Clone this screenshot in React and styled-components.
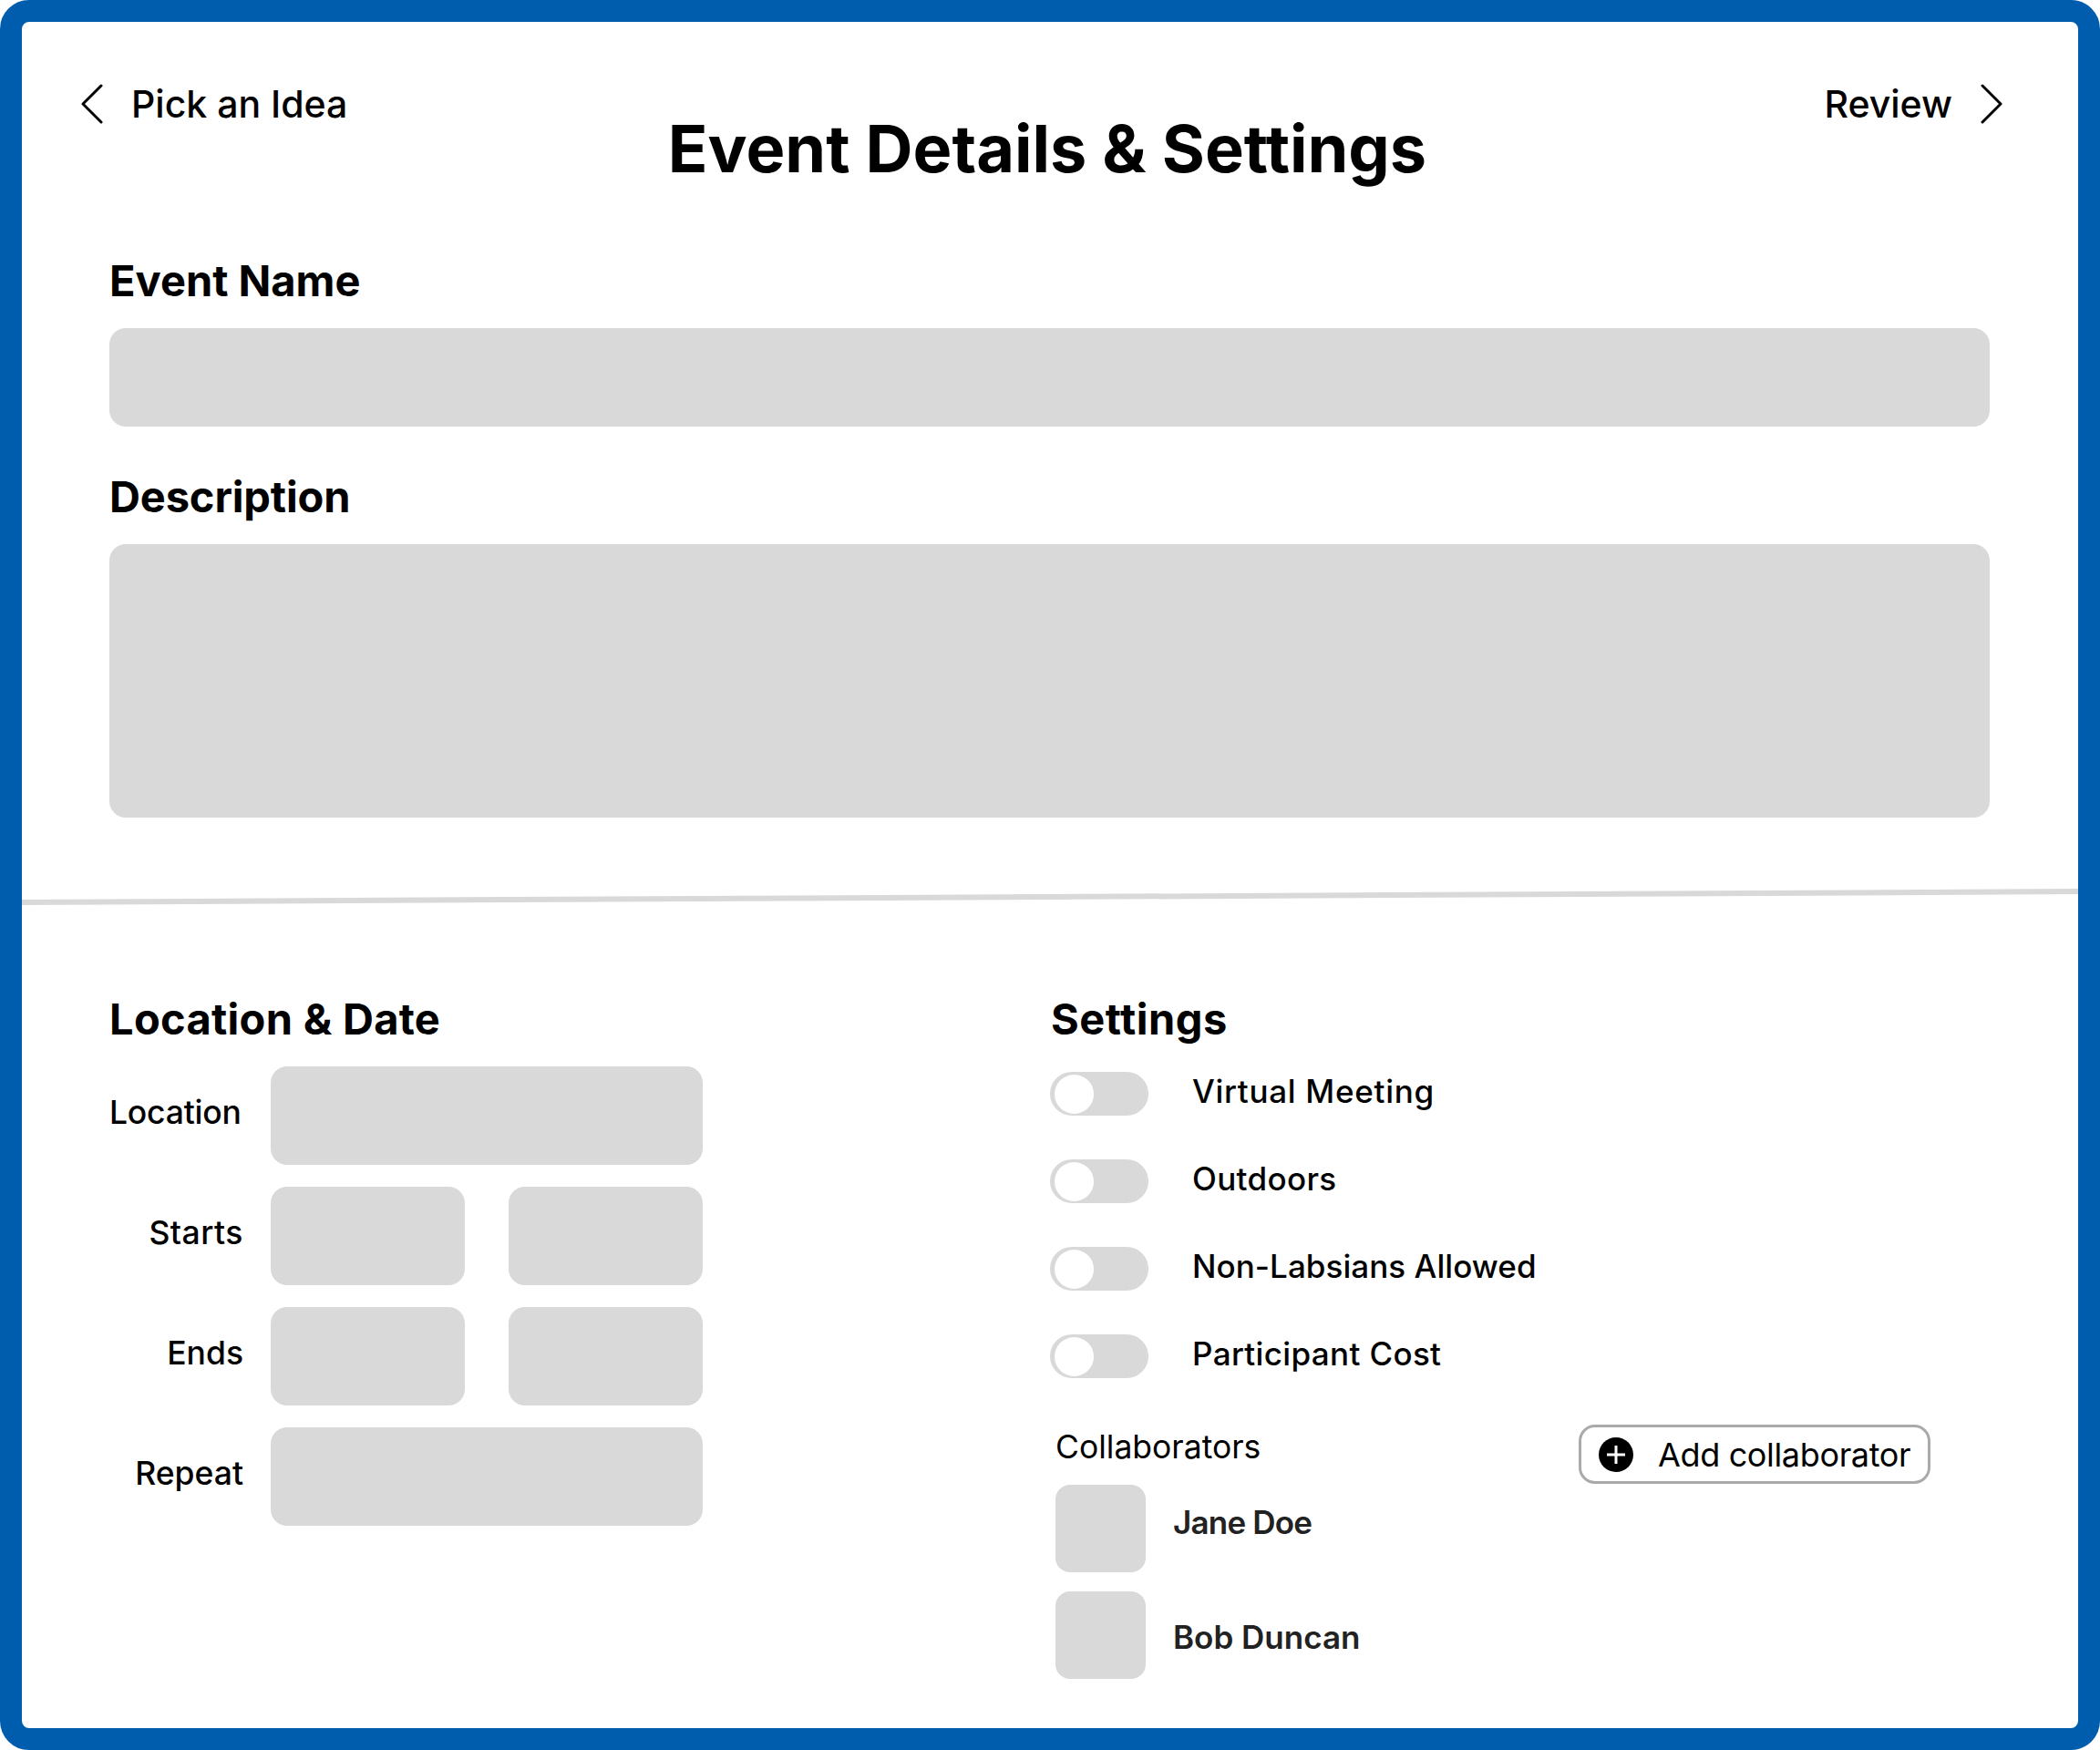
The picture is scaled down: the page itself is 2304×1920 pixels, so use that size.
import React from 'react';
import styled, { createGlobalStyle } from 'styled-components';

const GlobalStyle = createGlobalStyle`
  * { box-sizing: border-box; }
  html, body { margin: 0; padding: 0; background: #fff; }
  body { font-family: 'Inter', 'Liberation Sans', sans-serif; color: #000; }
`;

const Frame = styled.main`
  width: 2304px;
  height: 1920px;
  border: 24px solid #005dae;
  border-radius: 32px;
  background: #fff;
  overflow: hidden;
`;

const Header = styled.header`
  display: grid;
  grid-template-columns: 1fr auto 1fr;
  align-items: start;
  padding: 69px 83px 0 65px;
`;

const NavLink = styled.a`
  display: flex;
  align-items: center;
  gap: 31px;
  height: 42px;
  justify-content: ${({ $end }) => ($end ? 'flex-end' : 'flex-start')};
  font-size: 41px;
  font-weight: 500;
  line-height: 44px;
`;

const Title = styled.h1`
  margin: 34px 0 0 12px;
  font-size: 72px;
  font-weight: 700;
  line-height: 72px;
  white-space: nowrap;
`;

const Details = styled.section`
  padding: 84px 97px 0 96px;
`;

const SectionLabel = styled.h2`
  margin: 0 0 31px;
  padding-top: 2px;
  height: 46px;
  font-size: 47px;
  font-weight: 700;
  letter-spacing: ${({ $tracking }) => $tracking || '0'};
  line-height: 46px;
`;

const Field = styled.div`
  height: ${({ $tall }) => ($tall ? '300px' : '108px')};
  margin-bottom: ${({ $last }) => ($last ? '0' : '52px')};
  background: #d9d9d9;
  border-radius: 18px;
`;

const Divider = styled.hr`
  height: 6px;
  margin: 84px -10px 0;
  border: 0;
  background: #d9d9d9;
  transform: rotate(-0.3deg);
`;

const Columns = styled.section`
  display: grid;
  grid-template-columns: 1033px 1fr;
  padding: 106px 0 0 96px;
`;

const FormRows = styled.div`
  display: grid;
  grid-template-columns: 147px 474px;
  column-gap: 30px;
  row-gap: 24px;
  width: 651px;
`;

const RowLabel = styled.label`
  align-self: center;
  margin-bottom: 6px;
  padding-right: ${({ $inset }) => ($inset ? '3px' : '0')};
  font-size: 35.5px;
  font-weight: 500;
  letter-spacing: ${({ $tracking }) => $tracking || '0'};
  line-height: 1;
  text-align: right;
  white-space: nowrap;
`;

const FieldPair = styled.div`
  display: grid;
  grid-template-columns: ${({ $split }) => ($split ? '213px 213px' : '1fr')};
  column-gap: 48px;
`;

const SmallField = styled.div`
  height: 108px;
  background: #d9d9d9;
  border-radius: 18px;
`;

const SettingsHeading = styled(SectionLabel)`
  margin-bottom: 0;
`;

const ToggleList = styled.div`
  display: flex;
  flex-direction: column;
  gap: 48px;
  margin: 37px 0 0 -1px;
`;

const ToggleRow = styled.div`
  display: flex;
  align-items: center;
  gap: 48px;
  height: 48px;
`;

const Toggle = styled.span`
  display: flex;
  align-items: center;
  flex: none;
  width: 108px;
  height: 48px;
  padding-left: 5px;
  background: #d9d9d9;
  border-radius: 24px;
`;

const Knob = styled.span`
  width: 43px;
  height: 43px;
  background: #fff;
  border-radius: 50%;
`;

const ToggleLabel = styled.span`
  margin-bottom: 6px;
  font-size: 35px;
  font-weight: 500;
  letter-spacing: ${({ $tracking }) => $tracking};
  line-height: 1;
`;

const Collaborators = styled.div`
  display: flex;
  align-items: flex-start;
  margin: 51px 0 0 5px;
`;

const PeopleColumn = styled.div`
  width: 574px;
  padding-top: 5px;
`;

const PeopleHeading = styled.div`
  margin-bottom: 25px;
  padding-top: 2px;
  height: 36px;
  font-size: 35.5px;
  font-weight: 400;
  line-height: 36px;
`;

const Person = styled.div`
  display: flex;
  align-items: center;
  gap: 30px;
  margin-bottom: 21px;
`;

const Avatar = styled.span`
  flex: none;
  width: 99px;
  height: 96px;
  background: #d9d9d9;
  border-radius: 16px;
`;

const PersonName = styled.span`
  margin: ${({ $raised }) => ($raised ? '0 0 13px' : '4px 0 0')};
  color: #222;
  font-size: 35px;
  font-weight: 600;
  letter-spacing: ${({ $raised }) => ($raised ? '-0.8px' : '0')};
  line-height: 1;
`;

const AddButton = styled.button`
  display: flex;
  align-items: center;
  gap: 27px;
  width: 386px;
  height: 65px;
  padding: 0 0 0 19px;
  background: #fff;
  border: 3px solid #aaa;
  border-radius: 18px;
  color: #000;
  font-family: inherit;
  font-size: 36px;
  font-weight: 400;
  letter-spacing: -0.35px;
  line-height: 1;
  white-space: nowrap;
`;

const Chevron = ({ right }) => (
  <svg width="24" height="44" viewBox="0 0 24 44" fill="none">
    <path
      d={right ? 'M2 2 L22 22 L2 42' : 'M22 2 L2 22 L22 42'}
      stroke="#000"
      strokeWidth="3"
      strokeLinecap="round"
      strokeLinejoin="round"
    />
  </svg>
);

const PlusCircle = () => (
  <svg width="38" height="38" viewBox="0 0 38 38">
    <circle cx="19" cy="19" r="19" fill="#000" />
    <path d="M19 9 V29 M9 19 H29" stroke="#fff" strokeWidth="3" />
  </svg>
);

const toggles = [
  { label: 'Virtual Meeting', tracking: '0.7px' },
  { label: 'Outdoors', tracking: '0.35px' },
  { label: 'Non-Labsians Allowed', tracking: '0.05px' },
  { label: 'Participant Cost', tracking: '0.35px' },
];

const App = () => (
  <Frame>
    <GlobalStyle />

    <Header>
      <NavLink>
        <Chevron />
        Pick an Idea
      </NavLink>
      <Title>Event Details &amp; Settings</Title>
      <NavLink $end>
        Review
        <Chevron right />
      </NavLink>
    </Header>

    <Details>
      <SectionLabel>Event Name</SectionLabel>
      <Field />
      <SectionLabel $tracking="-0.13px">Description</SectionLabel>
      <Field $tall $last />
    </Details>

    <Divider />

    <Columns>
      <div>
        <SectionLabel $tracking="0.3px">Location &amp; Date</SectionLabel>
        <FormRows>
          <RowLabel $inset $tracking="-0.2px">Location</RowLabel>
          <FieldPair><SmallField /></FieldPair>
          <RowLabel $tracking="0.5px">Starts</RowLabel>
          <FieldPair $split><SmallField /><SmallField /></FieldPair>
          <RowLabel>Ends</RowLabel>
          <FieldPair $split><SmallField /><SmallField /></FieldPair>
          <RowLabel>Repeat</RowLabel>
          <FieldPair><SmallField /></FieldPair>
        </FormRows>
      </div>

      <div>
        <SettingsHeading $tracking="0.55px">Settings</SettingsHeading>
        <ToggleList>
          {toggles.map((t) => (
            <ToggleRow key={t.label}>
              <Toggle><Knob /></Toggle>
              <ToggleLabel $tracking={t.tracking}>{t.label}</ToggleLabel>
            </ToggleRow>
          ))}
        </ToggleList>

        <Collaborators>
          <PeopleColumn>
            <PeopleHeading>Collaborators</PeopleHeading>
            <Person>
              <Avatar />
              <PersonName $raised>Jane Doe</PersonName>
            </Person>
            <Person>
              <Avatar />
              <PersonName>Bob Duncan</PersonName>
            </Person>
          </PeopleColumn>
          <AddButton>
            <PlusCircle />
            Add collaborator
          </AddButton>
        </Collaborators>
      </div>
    </Columns>
  </Frame>
);

export default App;
